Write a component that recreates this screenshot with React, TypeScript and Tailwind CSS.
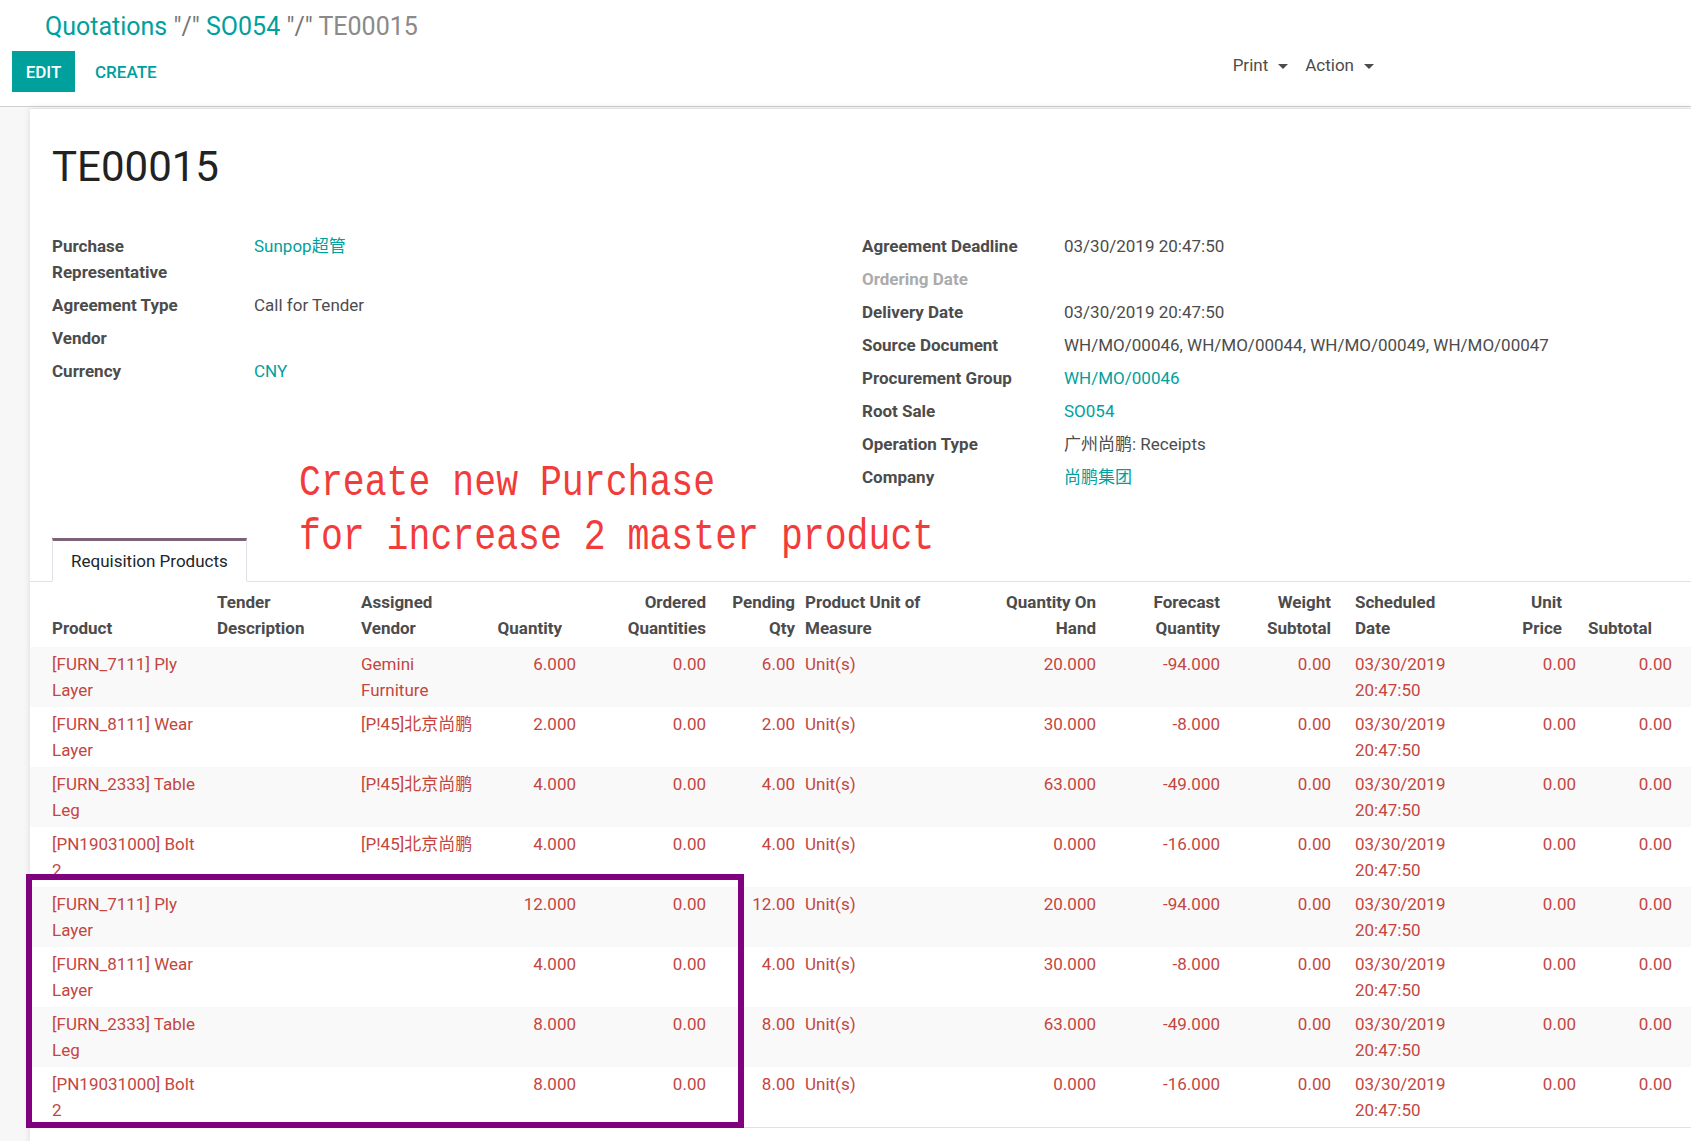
import React from "react";

type Line = {
  product: string;
  vendor: string;
  qty: string;
  pending: string;
  onHand: string;
  forecast: string;
};

const LINES: Line[] = [
  { product: "[FURN_7111] Ply Layer", vendor: "Gemini Furniture", qty: "6.000", pending: "6.00", onHand: "20.000", forecast: "-94.000" },
  { product: "[FURN_8111] Wear Layer", vendor: "[P!45]北京尚鹏", qty: "2.000", pending: "2.00", onHand: "30.000", forecast: "-8.000" },
  { product: "[FURN_2333] Table Leg", vendor: "[P!45]北京尚鹏", qty: "4.000", pending: "4.00", onHand: "63.000", forecast: "-49.000" },
  { product: "[PN19031000] Bolt 2", vendor: "[P!45]北京尚鹏", qty: "4.000", pending: "4.00", onHand: "0.000", forecast: "-16.000" },
  { product: "[FURN_7111] Ply Layer", vendor: "", qty: "12.000", pending: "12.00", onHand: "20.000", forecast: "-94.000" },
  { product: "[FURN_8111] Wear Layer", vendor: "", qty: "4.000", pending: "4.00", onHand: "30.000", forecast: "-8.000" },
  { product: "[FURN_2333] Table Leg", vendor: "", qty: "8.000", pending: "8.00", onHand: "63.000", forecast: "-49.000" },
  { product: "[PN19031000] Bolt 2", vendor: "", qty: "8.000", pending: "8.00", onHand: "0.000", forecast: "-16.000" },
];

type Field = { label: string; value?: string; link?: boolean; muted?: boolean };

const LEFT_FIELDS: Field[] = [
  { label: "Purchase Representative", value: "Sunpop超管", link: true },
  { label: "Agreement Type", value: "Call for Tender" },
  { label: "Vendor" },
  { label: "Currency", value: "CNY", link: true },
];

const RIGHT_FIELDS: Field[] = [
  { label: "Agreement Deadline", value: "03/30/2019 20:47:50" },
  { label: "Ordering Date", muted: true },
  { label: "Delivery Date", value: "03/30/2019 20:47:50" },
  { label: "Source Document", value: "WH/MO/00046, WH/MO/00044, WH/MO/00049, WH/MO/00047" },
  { label: "Procurement Group", value: "WH/MO/00046", link: true },
  { label: "Root Sale", value: "SO054", link: true },
  { label: "Operation Type", value: "广州尚鹏: Receipts" },
  { label: "Company", value: "尚鹏集团", link: true },
];

function FieldGroup({ fields }: { fields: Field[] }) {
  return (
    <div className="grid grid-cols-[202px_1fr] content-start">
      {fields.map((f) => (
        <React.Fragment key={f.label}>
          <div
            className={`py-[3.5px] pr-[27px] font-bold ${f.muted ? "text-[#ababab]" : "text-[#4c4c4c]"}`}
          >
            {f.label}
          </div>
          <div className={`py-[3.5px] ${f.link ? "text-[#00A09D]" : "text-[#4c4c4c]"}`}>{f.value}</div>
        </React.Fragment>
      ))}
    </div>
  );
}

function Caret() {
  return (
    <span className="ml-[10px] inline-block align-middle border-x-[5px] border-t-[5px] border-x-transparent border-t-[#4c4c4c]" />
  );
}

export default function App() {
  return (
    <div className="relative h-[1141px] w-full overflow-hidden bg-white font-[Roboto,'Noto_Sans_CJK_SC',sans-serif] text-[17px] leading-[26px] text-[#4c4c4c]">
      {/* control panel */}
      <div className="h-[107px] border-b border-[#cfcfcf] bg-white">
        <div className="pl-[45px] pt-[12px] text-[25px] leading-[30px]">
          <span className="text-[#00A09D]">Quotations</span>
          <span className="text-[#777]"> "/" </span>
          <span className="text-[#00A09D]">SO054</span>
          <span className="text-[#777]"> "/" </span>
          <span className="text-[#8a8a8a]">TE00015</span>
        </div>
        <div className="mt-[9px] flex items-start pl-[12px]">
          <button className="flex h-[41px] w-[63px] items-center justify-center bg-[#00A09D] font-medium text-white">
            EDIT
          </button>
          <button className="ml-[20px] self-center font-medium text-[#00A09D]">CREATE</button>
          <div className="ml-auto mr-[317px] mt-[2px] flex items-center gap-[17px] leading-[25px] text-[#4c4c4c]">
            <span>
              Print
              <Caret />
            </span>
            <span>
              Action
              <Caret />
            </span>
          </div>
        </div>
      </div>

      <div className="flex h-full">
        <div className="w-[30px] shrink-0 bg-[#f7f7f7]" />
        <div className="mt-[1px] min-w-0 flex-1 border-t border-[#e2e2e2] bg-white shadow-[0_0_6px_rgba(0,0,0,0.12)]">
          <h1 className="pl-[22px] pt-[33px] text-[42px] leading-[50px] text-[#222]">TE00015</h1>

          <div className="mt-[37px] grid grid-cols-2 pl-[22px] pr-[19px]">
            <FieldGroup fields={LEFT_FIELDS} />
            <FieldGroup fields={RIGHT_FIELDS} />
          </div>

          {/* notebook */}
          <div className="mt-[45px] flex border-b border-[#dee2e6] pl-[22px]">
            <div className="-mb-px border-x border-t-[3px] border-b border-x-[#dee2e6] border-t-[#7d6179] border-b-white bg-white px-[18px] pt-[7px] pb-[7px] text-[#212529]">
              Requisition Products
            </div>
          </div>

          <table className="w-[1661px] table-fixed border-collapse">
            <colgroup>
              <col className="w-[182px]" />
              <col className="w-[144px]" />
              <col className="w-[129px]" />
              <col className="w-[95px]" />
              <col className="w-[130px]" />
              <col className="w-[89px]" />
              <col className="w-[161px]" />
              <col className="w-[140px]" />
              <col className="w-[124px]" />
              <col className="w-[115px]" />
              <col className="w-[161px]" />
              <col className="w-[80px]" />
              <col className="w-[111px]" />
            </colgroup>
            <thead>
              <tr className="align-bottom font-bold text-[#4c4c4c] shadow-[0_3px_4px_-2px_rgba(0,0,0,0.08)]">
                <th className="pt-[7px] pb-[6px] pl-[22px] pr-[4px] text-left">Product</th>
                <th className="pt-[7px] pb-[6px] px-[5px] text-left">Tender Description</th>
                <th className="pt-[7px] pb-[6px] pl-[5px] pr-[6px] text-left">Assigned Vendor</th>
                <th className="pt-[7px] pb-[6px] pl-[4px] pr-[18px] text-right">Quantity</th>
                <th className="pt-[7px] pb-[6px] pl-[4px] pr-[4px] text-right">Ordered Quantities</th>
                <th className="pt-[7px] pb-[6px] pl-[4px] pr-[4px] text-right">Pending Qty</th>
                <th className="pt-[7px] pb-[6px] pl-[6px] pr-[5px] text-left">Product Unit of Measure</th>
                <th className="pt-[7px] pb-[6px] pl-[4px] pr-[4px] text-right">Quantity On Hand</th>
                <th className="pt-[7px] pb-[6px] pl-[4px] pr-[4px] text-right">Forecast Quantity</th>
                <th className="pt-[7px] pb-[6px] pl-[4px] pr-[8px] text-right">Weight Subtotal</th>
                <th className="pt-[7px] pb-[6px] pl-[16px] pr-[35px] text-left">Scheduled Date</th>
                <th className="pt-[7px] pb-[6px] pl-[4px] pr-[18px] text-right">Unit Price</th>
                <th className="pt-[7px] pb-[6px] pl-[4px] pr-[39px] text-right">Subtotal</th>
              </tr>
            </thead>
            <tbody className="text-[#c4463f]">
              {LINES.map((l, i) => (
                <tr key={i} className="align-top odd:bg-[#f9f9f9]">
                  <td className="py-[4px] pl-[22px] pr-[4px]">{l.product}</td>
                  <td className="py-[4px] px-[5px]" />
                  <td className="py-[4px] pl-[5px] pr-[6px]">{l.vendor}</td>
                  <td className="py-[4px] px-[4px] text-right">{l.qty}</td>
                  <td className="py-[4px] px-[4px] text-right">0.00</td>
                  <td className="py-[4px] px-[4px] text-right">{l.pending}</td>
                  <td className="py-[4px] pl-[6px] pr-[5px]">Unit(s)</td>
                  <td className="py-[4px] px-[4px] text-right">{l.onHand}</td>
                  <td className="py-[4px] px-[4px] text-right">{l.forecast}</td>
                  <td className="py-[4px] pl-[4px] pr-[8px] text-right">0.00</td>
                  <td className="py-[4px] pl-[16px] pr-[35px]">03/30/2019 20:47:50</td>
                  <td className="py-[4px] px-[4px] text-right">0.00</td>
                  <td className="py-[4px] pl-[4px] pr-[19px] text-right">0.00</td>
                </tr>
              ))}
            </tbody>
            <tfoot>
              <tr className="border-t border-[#dee2e6] font-bold text-[#4c4c4c]">
                <td colSpan={9} className="pt-[6px]" />
                <td className="pt-[6px] pl-[4px] pr-[8px] text-right">0.00</td>
                <td colSpan={2} />
                <td className="pt-[6px] pl-[4px] pr-[19px] text-right">0.00</td>
              </tr>
            </tfoot>
          </table>
        </div>
      </div>

      {/* annotation drawn on top of the screenshot */}
      <div className="absolute left-[299px] top-[457px] origin-top-left scale-y-[1.22] whitespace-pre font-['Liberation_Mono',monospace] text-[36.5px] leading-[44px] text-[#f23b3b]">
        {"Create new Purchase\nfor increase 2 master product"}
      </div>
      <div className="absolute left-[26px] top-[874px] h-[254px] w-[718px] border-[6px] border-[#800080]" />
    </div>
  );
}
